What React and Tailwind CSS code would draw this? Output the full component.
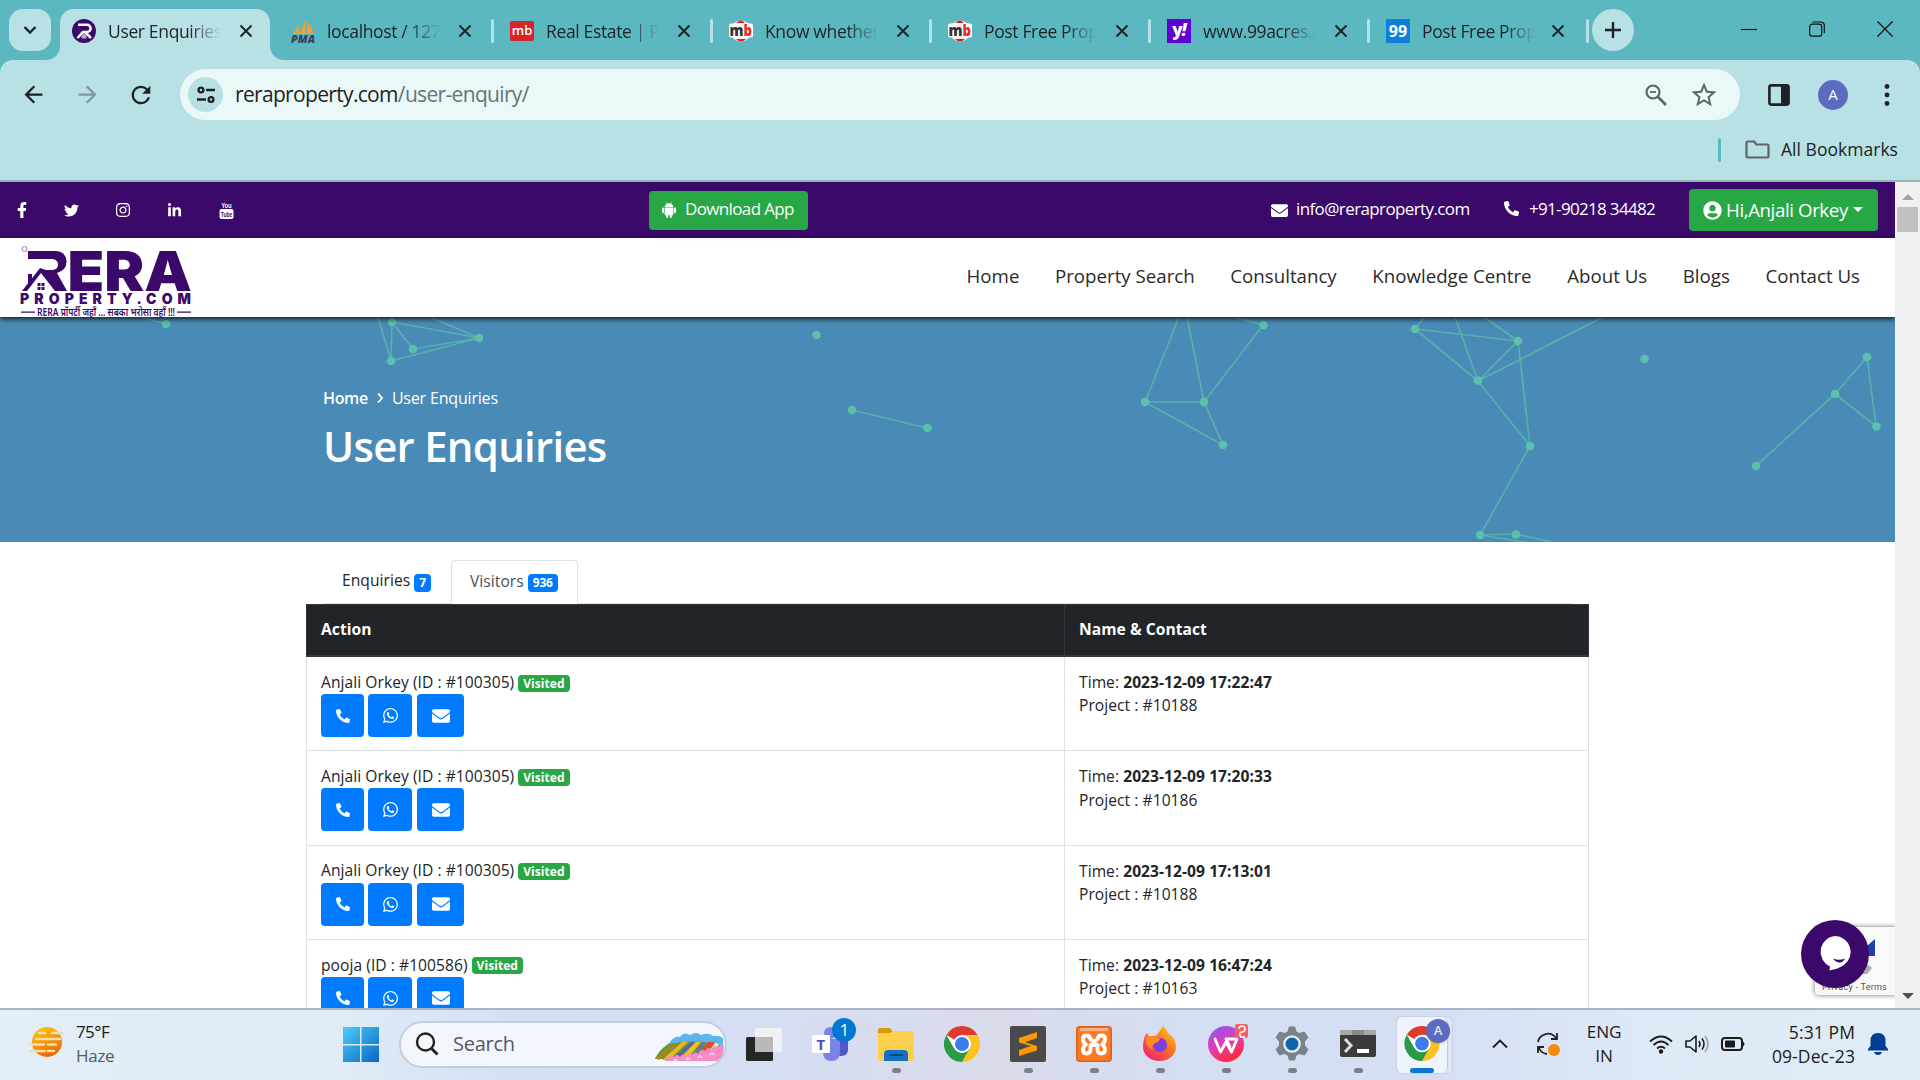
import React from "react";
import { FaFacebookF, FaTwitter, FaInstagram, FaLinkedinIn, FaEnvelope, FaPhoneAlt, FaWhatsapp, FaUserCircle } from "react-icons/fa";
import { MdArrowBack, MdArrowForward, MdRefresh, MdStarOutline } from "react-icons/md";

/* ---------- favicons ---------- */
const ReraFav = () => (
  <svg viewBox="0 0 24 24" className="h-6 w-6">
    <circle cx="12" cy="12" r="12" fill="#3b096a" />
    <path d="M6 5.800h9a3.600 3.600 0 0 1 0 7.200H11L5.500 19M13 13l6 6" fill="none" stroke="#fff" strokeWidth="2.500" />
    <path d="M9.500 19.500v-3l2.500-2.500 2.500 2.500v3z" fill="#b9a6cf" />
  </svg>
);
const PmaFav = () => (
  <svg viewBox="0 0 24 24" className="h-6 w-6">
    <path d="M2 15Q6 10 7 4l1 11zM8 15Q13 8 13.500 0L15 15zM15.500 15L17 3q4 6 6 12z" fill="#f6a02e" />
    <text x="0" y="23.500" fontSize="10.500" fontWeight="800" fontStyle="italic" fontFamily="Open Sans, sans-serif" fill="#3b3f63" textLength="24" lengthAdjust="spacingAndGlyphs">PMA</text>
  </svg>
);
const MbFav = () => (
  <div className="flex h-5 w-6 items-center justify-center rounded-[2px] bg-[#d8232a] pb-[2px] font-['Open_Sans',sans-serif] text-[13px] font-semibold leading-none text-white">mb</div>
);
const MbRound = () => (
  <svg viewBox="0 0 24 24" className="h-6 w-6">
    <circle cx="12" cy="12" r="10.500" fill="#fbeeee" />
    <path d="M7 4Q12-1 16 4zM7 20q5 5 10 0z" fill="#e3201b" />
    <rect x="0" y="4.500" width="24" height="14" rx="2" fill="#fff" />
    <text x="0.500" y="17" fontSize="16" fontWeight="800" fontFamily="Open Sans, sans-serif" fill="#333" textLength="14" lengthAdjust="spacingAndGlyphs">m</text>
    <text x="14.500" y="17" fontSize="16" fontWeight="800" fontFamily="Open Sans, sans-serif" fill="#ee2a24" textLength="8.500" lengthAdjust="spacingAndGlyphs">b</text>
  </svg>
);
const YahooFav = () => (
  <div className="flex h-6 w-6 items-center justify-center bg-[#5f01d1] pb-1 font-['Open_Sans',sans-serif] text-[17px] font-extrabold leading-none tracking-[-1px] text-white">y<i>!</i></div>
);
const NNFav = () => (
  <div className="flex h-6 w-6 items-center justify-center bg-[#0f7fdc] font-['Open_Sans',sans-serif] text-[16px] font-bold leading-none text-white">99</div>
);

const CloseX = () => (
  <svg viewBox="0 0 14 14" className="h-[14px] w-[14px] shrink-0">
    <path d="M1.500 1.500l11 11M12.500 1.500l-11 11" stroke="#1f2224" strokeWidth="2" />
  </svg>
);

const tabs = [
  [PmaFav, "localhost / 127.0"],
  [MbFav, "Real Estate | Prop"],
  [MbRound, "Know whether"],
  [MbRound, "Post Free Property"],
  [YahooFav, "www.99acres.com"],
  [NNFav, "Post Free Property"],
];

const Title = ({ children }) => (
  <span className="ml-3 w-[113px] shrink-0 overflow-hidden whitespace-nowrap text-[17.500px] leading-6 tracking-[-0.350px] text-[#1f2224] [mask-image:linear-gradient(to_right,black_72%,transparent)]">{children}</span>
);

function TabStrip() {
  return (
    <div className="flex h-[60px] items-start bg-[#5bb8c1] pt-[9px] pl-[9px]">
      <div className="flex h-[42px] w-[42px] items-center justify-center rounded-[14px] bg-[#b8e1e5]">
        <svg viewBox="0 0 14 10" className="h-[10px] w-[14px]"><path d="M1.500 2L7 7.500 12.500 2" fill="none" stroke="#1f2224" strokeWidth="2.400" /></svg>
      </div>
      <div className="relative ml-[9px] flex h-[51px] w-[210px] items-center rounded-t-[14px] bg-[#b8e1e5] pb-[7px] pl-3">
        <svg viewBox="0 0 14 14" className="absolute -left-[14px] bottom-0 h-[14px] w-[14px]"><path d="M14 0v14H0A14 14 0 0 0 14 0" fill="#b8e1e5" /></svg>
        <svg viewBox="0 0 14 14" className="absolute -right-[14px] bottom-0 h-[14px] w-[14px]"><path d="M0 0v14h14A14 14 0 0 1 0 0" fill="#b8e1e5" /></svg>
        <ReraFav /><Title>User Enquiries</Title><span className="w-[18px]" /><CloseX />
      </div>
      <div className="flex h-[44px] pl-[5px]">
        {tabs.map(([Icon, t], i) => (
          <div key={i} className="flex w-[219px] items-center pl-4">
            <Icon /><Title>{t}</Title><span className={i === 5 ? "w-[16px]" : "w-[18px]"} /><CloseX />
            <span className="ml-auto h-6 w-[3px] rounded bg-[#b8e1e5]" />
          </div>
        ))}
      </div>
      <div className="ml-[3px] flex h-[42px] w-[42px] items-center justify-center rounded-full bg-[#b8e1e5]">
        <svg viewBox="0 0 16 16" className="h-4 w-4"><path d="M8 0v16M0 8h16" stroke="#1f2224" strokeWidth="2.400" /></svg>
      </div>
      <div className="ml-auto flex h-10 items-center gap-[52px] pr-[27px]">
        <svg viewBox="0 0 16 16" className="h-4 w-4"><path d="M0 8.500h16" stroke="#111" strokeWidth="1.200" /></svg>
        <svg viewBox="0 0 16 16" className="h-4 w-4" fill="none" stroke="#111" strokeWidth="1.200"><rect x="0.700" y="3.200" width="12" height="12" rx="2.500" /><path d="M3.500 1h8.500a3.300 3.300 0 0 1 3.300 3.300V12" /></svg>
        <svg viewBox="0 0 16 16" className="h-4 w-4"><path d="M.5.5l15 15M15.500.5l-15 15" stroke="#111" strokeWidth="1.200" /></svg>
      </div>
    </div>
  );
}

function Toolbar() {
  return (
    <div className="bg-[#5bb8c1]">
      <div className="h-[122px] rounded-t-[13px] border-b-2 border-[#93b4b7] bg-[#b8e1e5]">
        <div className="flex h-[69px] items-center">
          <MdArrowBack className="ml-[20px] h-[27px] w-[27px] text-[#1f2224]" />
          <MdArrowForward className="ml-[27px] h-[27px] w-[27px] text-[#7b999c]" />
          <MdRefresh className="ml-[26px] h-[28px] w-[28px] text-[#1f2224]" />
          <div className="ml-[25px] flex h-[51px] w-[1560px] items-center rounded-full bg-[#ebf8f8] pl-2">
            <div className="flex h-[35px] w-[35px] items-center justify-center rounded-full bg-[#b8e1e5]">
              <svg viewBox="0 0 18 18" className="h-[18px] w-[18px]" fill="none" stroke="#1f2224" strokeWidth="2.400"><circle cx="4" cy="4" r="2.400" /><path d="M9 4h9M0 13.500h9" /><circle cx="14" cy="13.500" r="2.400" /></svg>
            </div>
            <span className="mb-px ml-[12px] text-[21px] leading-7 tracking-[-0.670px] text-[#1f2224]">reraproperty.com<span className="text-[#62767a]">/user-enquiry/</span></span>
            <svg viewBox="0 0 22 22" className="mr-[22px] ml-auto h-[22px] w-[22px]" fill="none" stroke="#5b6668" strokeWidth="2.200"><circle cx="8" cy="8" r="6.500" /><path d="M12.800 12.800L21 21" strokeWidth="2.800" /><path d="M5 8h6" strokeWidth="1.800" /></svg>
            <MdStarOutline className="mr-[21px] h-[30px] w-[30px] text-[#5b6668]" />
          </div>
          <svg viewBox="0 0 22 22" className="ml-[28px] h-[22px] w-[22px]"><rect x="1.400" y="1.400" width="19.200" height="19.200" rx="2" fill="none" stroke="#1f2224" strokeWidth="2.600" /><path d="M13 1h7v20h-7z" fill="#1f2224" /></svg>
          <div className="ml-[28px] flex h-[30px] w-[30px] items-center justify-center rounded-full bg-[#5c6bc0] text-[15px] text-white">A</div>
          <svg viewBox="0 0 6 22" className="ml-[36px] h-[22px] w-[6px]" fill="#1f2224"><circle cx="3" cy="2.500" r="2.400" /><circle cx="3" cy="11" r="2.400" /><circle cx="3" cy="19.500" r="2.400" /></svg>
        </div>
        <div className="flex h-[41px] items-center justify-end pr-[22px]">
          <span className="mr-[24px] h-6 w-[3px] rounded bg-[#5bb8c1]" />
          <svg viewBox="0 0 25 19" className="mr-[11px] h-[19px] w-[25px]"><path d="M1.500 2.500q0-1 1-1H9l2.500 3h11q1 0 1 1v11q0 1-1 1h-20q-1 0-1-1z" fill="none" stroke="#5b6668" strokeWidth="2.200" strokeLinejoin="round" /></svg>
          <span className="pb-px text-[17.500px] leading-6 tracking-[0.030px] text-[#1f2224]">All Bookmarks</span>
        </div>
      </div>
    </div>
  );
}

function TopBar() {
  return (
    <div className="flex h-[56px] items-center bg-[#3b096a] text-white">
      <div className="flex w-[649px] items-center">
        <FaFacebookF className="ml-[14px] h-4 w-4" />
        <FaTwitter className="ml-[34px] h-[15px] w-[15px]" />
        <FaInstagram className="ml-[36px] h-4 w-4" />
        <FaLinkedinIn className="ml-[36px] h-[15px] w-[15px]" />
        <svg viewBox="0 0 15 18" className="ml-[37px] h-[18px] w-[15px]">
          <text x="2.500" y="6.800" fontSize="8" fontWeight="700" fontFamily="Liberation Sans, sans-serif" fill="#fff" textLength="10" lengthAdjust="spacingAndGlyphs">You</text>
          <rect x="0.500" y="8" width="14" height="10" rx="2" fill="#fff" />
          <text x="1.800" y="16" fontSize="8" fontWeight="700" fontFamily="Liberation Sans, sans-serif" fill="#3b096a" textLength="11.500" lengthAdjust="spacingAndGlyphs">Tube</text>
        </svg>
      </div>
      <div className="flex h-[39px] w-[159px] items-center rounded bg-[#28a745] pb-[2px] pl-[13px]">
        <svg viewBox="0 0 14 16" className="mt-px h-4 w-[14px]" fill="#fff">
          <path d="M2.600 5.200Q2.800 2.600 5 1.700L4.200.300l.5-.2.800 1.400q1.500-.4 3 0L9.300.100l.5.200L9 1.700q2.200.9 2.400 3.500zM2.600 5.700h8.800v6.600q0 .9-.9.900H9.700v1.900q0 .9-.9.900t-.9-.9v-1.900H6.100v1.900q0 .9-.9.900t-.9-.9v-1.900h-.8q-.9 0-.9-.9z" />
          <rect x="0" y="5.500" width="1.900" height="5.600" rx="0.950" /><rect x="12.100" y="5.500" width="1.900" height="5.600" rx="0.950" />
        </svg>
        <span className="ml-[9px] text-[17px] font-medium tracking-[-0.640px] whitespace-nowrap">Download App</span>
      </div>
      <FaEnvelope className="ml-[463px] h-[17px] w-[17px]" />
      <span className="ml-2 w-[175px] pb-[2px] text-[17px] font-medium tracking-[-0.610px] whitespace-nowrap">info@reraproperty.com</span>
      <FaPhoneAlt className="mb-[3px] ml-[33px] h-[15px] w-[15px]" />
      <span className="ml-[10px] w-[127px] pb-[2px] text-[17px] font-medium tracking-[-0.680px] whitespace-nowrap">+91-90218 34482</span>
      <div className="ml-[33px] flex h-[42px] w-[189px] items-center rounded bg-[#28a745] pl-[14px]">
        <FaUserCircle className="h-[19px] w-[19px]" />
        <span className="ml-1 text-[18.700px] font-medium tracking-[-0.400px] whitespace-nowrap">Hi,Anjali Orkey</span>
        <svg viewBox="0 0 10 5" className="mb-px ml-[5px] h-[5px] w-[10px]"><path d="M0 0h10L5 5z" fill="#fff" /></svg>
      </div>
    </div>
  );
}

const Logo = () => (
  <svg viewBox="0 0 172 72" className="mt-[8px] ml-[20px] h-[72px] w-[172px]" fill="#3b096a">
    <circle cx="4.500" cy="3" r="2.500" fill="none" stroke="#8d6cab" strokeWidth="0.900" />
    <path d="M8 5H36Q46 6 46.500 15T37 27L47 45H35L22 24H33Q38 23 38 18.500T33 13H8z" />
    <path d="M8 28h4v6l-4 5zM2 45L20 22l6 2 12 21h-3L21 27 7 45z" />
    <path d="M17.500 37h3v3h-3zM21.500 37h3v3h-3zM17.500 41h3v3h-3zM21.500 41h3v3h-3z" />
    <text x="47.500" y="45" fontSize="55" fontWeight="900" fontFamily="Inter, sans-serif" textLength="124.500" lengthAdjust="spacingAndGlyphs">ERA</text>
    <text x="0" y="58" fontSize="14" fontWeight="900" fontFamily="Inter, sans-serif" textLength="171">PROPERTY.COM</text>
    <path d="M1 65.500h14v1.200H1zM157 65.500h14v1.200h-14z" />
    <text x="17" y="69.500" fontSize="10.500" fontWeight="600" fontFamily="Noto Sans, Noto Sans Devanagari, sans-serif" textLength="138" lengthAdjust="spacingAndGlyphs">RERA प्रॉपर्टी जहाँ ... सबका भरोसा वहाँ !!!</text>
  </svg>
);

function Nav() {
  return (
    <div className="relative z-10 flex h-[79px] items-center bg-white shadow-[0_2px_5px_rgba(0,0,0,0.800)]">
      <Logo />
      <div className="ml-auto flex gap-[35.600px] pr-[35px] pb-[2px] text-[18.700px] font-medium whitespace-nowrap text-[#2a2a2a]">
        {["Home", "Property Search", "Consultancy", "Knowledge Centre", "About Us", "Blogs", "Contact Us"].map((t) => <span key={t}>{t}</span>)}
      </div>
    </div>
  );
}

/* Decorative network of points, in banner coordinates */
const points = [[166, 7], [392, 5], [479, 21], [413, 32], [391, 44], [816.500, 18], [852, 93], [927.500, 111], [1263.500, 8], [1145, 85], [1204, 85], [1223, 128], [1415, 12], [1518, 24], [1478, 63.500], [1530, 129], [1480, 218], [1516, 217.500], [1644.500, 42], [1867, 40], [1835, 77], [1876.500, 109.500], [1756, 149]];
const lines = [[141, 0, 166, 7], [392, 5, 479, 21], [392, 5, 413, 32], [413, 32, 479, 21], [391, 44, 479, 21], [391, 44, 392, 5], [391, 44, 378, 0], [479, 21, 430, 0], [852, 93, 927, 111], [1145, 85, 1179, 0], [1204, 85, 1187, 0], [1204, 85, 1263, 8], [1145, 85, 1204, 85], [1145, 85, 1223, 128], [1204, 85, 1223, 128], [1263, 8, 1236, 0], [1415, 12, 1518, 24], [1415, 12, 1478, 64], [1478, 64, 1518, 24], [1518, 24, 1530, 129], [1478, 64, 1530, 129], [1530, 129, 1480, 218], [1480, 218, 1516, 217], [1480, 218, 1524, 225], [1516, 217, 1551, 225], [1415, 12, 1425, 0], [1478, 64, 1455, 0], [1478, 64, 1603, 0], [1518, 24, 1484, 0], [1867, 40, 1835, 77], [1867, 40, 1876, 109], [1835, 77, 1876, 109], [1835, 77, 1756, 149]];

function Banner() {
  return (
    <div className="relative h-[225px] overflow-hidden bg-[#4a8ab6] pt-[69px] pl-[323px] text-white">
      <svg viewBox="0 0 1895 225" className="absolute top-0 left-0 h-[225px] w-[1895px]">
        {lines.map(([a, b, c, d], i) => <line key={i} x1={a} y1={b} x2={c} y2={d} stroke="#5cc0a8" strokeOpacity="0.700" strokeWidth="1.700" />)}
        {points.map(([x, y], i) => <circle key={i} cx={x} cy={y} r="4.300" fill="#5cc0ab" />)}
      </svg>
      <div className="relative flex h-6 items-center text-[16px] tracking-[-0.350px]">
        <span className="font-semibold">Home</span>
        <svg viewBox="0 0 6 10" className="mx-[9px] h-[10px] w-[6px]"><path d="M1 .5L5 5 1 9.500" fill="none" stroke="#fff" strokeWidth="1.700" /></svg>
        <span className="font-medium tracking-[-0.180px]">User Enquiries</span>
      </div>
      <h1 className="relative mt-[5px] text-[42px] leading-[62px] font-semibold tracking-[-0.750px]">User Enquiries</h1>
    </div>
  );
}

const rows = [
  ["Anjali Orkey (ID : #100305)", "2023-12-09 17:22:47", "#10188"],
  ["Anjali Orkey (ID : #100305)", "2023-12-09 17:20:33", "#10186"],
  ["Anjali Orkey (ID : #100305)", "2023-12-09 17:13:01", "#10188"],
  ["pooja (ID : #100586)", "2023-12-09 16:47:24", "#10163"],
];

function Table() {
  return (
    <div className="mx-auto w-[1283px] text-[15.600px] leading-[23.400px] tracking-[0.050px] text-[#212529]">
      <div className="mx-[17px] flex h-[62px] items-end border-b border-[#dee2e6]">
        <div className="flex h-[43px] w-[128px] items-center pb-px pl-[19px]">Enquiries<span className="mt-[3px] ml-1 rounded bg-[#007bff] px-[5px] text-[12px] leading-[18px] font-bold text-white">7</span></div>
        <div className="-mb-px flex h-[44px] w-[127px] items-center rounded-t border border-b-0 border-[#dee2e6] bg-white pb-[2px] pl-[18px] text-[#495057]">Visitors<span className="mt-[3px] ml-1 rounded bg-[#007bff] px-[5px] text-[12px] leading-[18px] font-bold tracking-[-0.200px] text-white">936</span></div>
      </div>
      <div className="flex h-[53px] border border-b-2 border-[#32383e] bg-[#212529] font-bold text-white">
        <div className="w-[758px] border-r border-[#32383e] pt-[13px] pl-[14px]">Action</div>
        <div className="pt-[13px] pl-[14px]">Name &amp; Contact</div>
      </div>
      {rows.map(([n, t, p], i) => (
        <div key={i} className="flex h-[94.330px] border border-t-0 border-[#dee2e6]">
          <div className="w-[758px] border-r border-[#dee2e6] pt-[13px] pl-[14px]">
            <div className="flex h-6 items-center pt-px">{n}<span className="mt-px ml-1 rounded bg-[#28a745] px-[5px] text-[12px] leading-[17px] font-bold text-white">Visited</span></div>
            <div className="flex gap-[4px] text-white">
              <span className="flex h-[43px] w-[43px] items-center justify-center rounded bg-[#007bff]"><FaPhoneAlt className="h-[14px] w-[14px]" /></span>
              <span className="flex h-[43px] w-[44px] items-center justify-center rounded bg-[#007bff]"><FaWhatsapp className="h-[17px] w-[17px]" /></span>
              <span className="ml-px flex h-[43px] w-[47px] items-center justify-center rounded bg-[#007bff]"><FaEnvelope className="h-[18px] w-[18px]" /></span>
            </div>
          </div>
          <div className="pt-[14px] pl-[14px]">
            <div>Time: <b>{t}</b></div>
            <div>Project : {p}</div>
          </div>
        </div>
      ))}
    </div>
  );
}

/* ---------- taskbar icons ---------- */
const Chrome = () => (
  <svg viewBox="0 0 36 36" className="h-9 w-9">
    <circle cx="18" cy="18" r="18" fill="#fff" />
    <path d="M18 18L2.400 9A18 18 0 0 1 33.600 9z" fill="#de3a2f" />
    <path d="M18 9h15.600A18 18 0 0 1 18 36l7.800-13.500z" fill="#fcc31e" />
    <path d="M2.400 9A18 18 0 0 0 18 36l7.800-13.500H10.200z" fill="#2a9a48" />
    <circle cx="18" cy="18" r="9" fill="#fff" /><circle cx="18" cy="18" r="7" fill="#3a7bed" />
  </svg>
);
const TaskView = () => (
  <svg viewBox="0 0 36 36" className="h-9 w-9"><rect x="0" y="11" width="27" height="24" rx="1.500" fill="#262626" /><rect x="9" y="2" width="27" height="24" rx="1.500" fill="#f1f1f3" /><path d="M9 11h18v15H9z" fill="#b9b9bb" /></svg>
);
const Teams = () => (
  <svg viewBox="0 0 36 36" className="h-9 w-9 overflow-visible">
    <circle cx="18" cy="7" r="6" fill="#7b83eb" /><path d="M27 12h9v12q0 5-6 6h-3z" fill="#5059c9" /><path d="M11 13h17v13q0 9-8.500 9T11 26z" fill="#7b83eb" />
    <rect x="0" y="9" width="18" height="18" rx="1" fill="#fff" /><text x="4.500" y="23.500" fontSize="15" fontWeight="700" fontFamily="Open Sans, sans-serif" fill="#4b53bc">T</text>
    <circle cx="32" cy="4" r="12" fill="#0078d4" /><text x="27.500" y="10" fontSize="17" fontFamily="Open Sans, sans-serif" fill="#fff">1</text>
  </svg>
);
const Explorer = () => (
  <svg viewBox="0 0 36 36" className="h-9 w-9"><path d="M0 4q0-2 2-2h10l3 4v6H0z" fill="#d99a07" /><rect y="5" width="36" height="30" rx="2" fill="#fccf4d" /><path d="M0 7h12l3-2H0z" fill="#d99a07" /><path d="M6 35V28q0-4 4-4h16q4 0 4 4v7z" fill="#1273c4" /><path d="M11 29h14" stroke="#0b4a86" strokeWidth="2" /></svg>
);
const Sublime = () => (
  <svg viewBox="0 0 36 36" className="h-9 w-9"><rect width="36" height="36" rx="2" fill="#4a4a4a" /><path d="M9 12L27 6v6l-12 4.300 12 3.700v4.500L9 30v-6l12-4-12-3.500z" fill="#ff9800" /></svg>
);
const Xampp = () => (
  <svg viewBox="0 0 36 36" className="h-9 w-9"><rect width="36" height="36" rx="4" fill="#d9611a" /><rect x="1.500" y="1.500" width="33" height="33" rx="3" fill="#fb7a24" /><rect x="4" y="2" width="28" height="3" fill="#f7b083" /><path d="M14.500 13Q14 9.500 10.500 9.500 7 9.500 7 13.500q0 3 3 5-3 2-3 5 0 4 3.500 4 4 0 4-4.500v-4h7v4q0 4.500 4 4.500 3.500 0 3.500-4 0-3-3-5 3-2 3-5 0-4-3.500-4-3.500 0-4 3.500L18 16z" fill="none" stroke="#fff" strokeWidth="3.800" strokeLinejoin="round" /></svg>
);
const Firefox = () => (
  <svg viewBox="0 0 36 36" className="h-9 w-9">
    <defs><linearGradient id="ff" x1="1" y1="0" x2="0.200" y2="1"><stop offset="0" stopColor="#ffe226" /><stop offset="0.450" stopColor="#ff7a1c" /><stop offset="1" stopColor="#ef1f72" /></linearGradient></defs>
    <path d="M21 0q4 3 5 7 8 5 8 14a16.500 14 0 0 1-33 0Q1 12 5 7q1 3 3 4 3-2 6-1 4-5 7-10z" fill="url(#ff)" />
    <circle cx="18" cy="19" r="7" fill="#7b3fe0" /><path d="M4 11q8-3 14 2-1 3-5 4-4 3-2 7-8-3-7-13z" fill="#ff8a1f" />
  </svg>
);
const Wps = () => (
  <svg viewBox="0 0 36 36" className="h-9 w-9 overflow-visible">
    <defs><linearGradient id="wps" x1="0" y1="0" x2="0.500" y2="1"><stop offset="0" stopColor="#7d5cff" /><stop offset="0.550" stopColor="#e33bb8" /><stop offset="1" stopColor="#ff2b3d" /></linearGradient></defs>
    <circle cx="18" cy="18" r="18" fill="url(#wps)" /><path d="M7 13l5.500 13L18 16l5.500 10L29 13H18l4 8" fill="none" stroke="#fff" strokeWidth="2.800" strokeLinejoin="round" strokeLinecap="round" />
    <rect x="27" y="-2" width="13" height="14" rx="2.500" fill="#f55f66" /><path d="M31 3q0-3 3-3t3 3-3 3-2 3 2 2h3" fill="none" stroke="#fff" strokeWidth="1.400" />
  </svg>
);
const Gear = () => (
  <svg viewBox="0 0 36 36" className="h-9 w-9">
    <path d="M15 0.500h6l1.500 5 3 1.500 5-1.500 4 6-3.500 4v4l3.500 4-4 6-5-1.500-3 1.500-1.500 5h-6l-1.500-5-3-1.500-5 1.500-4-6 3.500-4v-4l-3.500-4 4-6 5 1.500 3-1.500z" fill="#7a838a" />
    <circle cx="18" cy="18" r="8.800" fill="#e9edf1" /><circle cx="18" cy="18" r="6.500" fill="#0f62ac" />
  </svg>
);
const Terminal = () => (
  <svg viewBox="0 0 36 36" className="h-9 w-9"><rect y="4" width="36" height="27" rx="2" fill="#3b3b3b" /><path d="M0 9V6q0-2 2-2h32q2 0 2 2v3z" fill="#a8a8a8" /><path d="M12 4h12v5H12z" fill="#8a8a8a" /><path d="M5 13l6 6.500L5 26" fill="none" stroke="#ddd" strokeWidth="3" /><rect x="17" y="23" width="12" height="4" fill="#fff" /></svg>
);

const apps = [[TaskView, 0], [Teams, 0], [Explorer, 1], [Chrome, 0], [Sublime, 1], [Xampp, 1], [Firefox, 1], [Wps, 1], [Gear, 1], [Terminal, 1]];

function Taskbar() {
  return (
    <div className="flex h-[72px] items-center border-t-2 border-[#aab3c2] bg-[linear-gradient(90deg,#e3eef6_0%,#dfebf5_18%,#d4dff6_27%,#d5def4_38%,#d9dbea_52%,#d3dff4_65%,#d6def3_74%,#deebf7_88%,#dfecf8_100%)] pb-[2px] text-[#1b1b1b]">
      <svg viewBox="0 0 36 32" className="mb-1 ml-[28px] h-8 w-9">
        <defs><linearGradient id="sun" x1="0" y1="0" x2="0.400" y2="1"><stop offset="0" stopColor="#ffce0a" /><stop offset="1" stopColor="#ee6a0c" /></linearGradient></defs>
        <circle cx="19" cy="16" r="15" fill="url(#sun)" />
        <g stroke="#f3dfae" strokeLinecap="round" strokeWidth="2.400"><path d="M11 7h6M24 7h10M8 13h24M2 18.500h14M20 18.500h8M2 25h15M20 25h6" /></g>
      </svg>
      <div className="ml-[12px] w-[80px] text-[17px] leading-6 tracking-[-0.300px]"><div className="tracking-[-0.600px]">75°F</div><div className="text-[#55595f]">Haze</div></div>
      <svg viewBox="0 0 36 36" className="ml-[187px] h-9 w-9">
        <defs><linearGradient id="win" x1="0" y1="0" x2="1" y2="1"><stop offset="0" stopColor="#4ecbfa" /><stop offset="1" stopColor="#0669c4" /></linearGradient></defs>
        <path d="M0 1h17v17H0zM18.500 1H36v17H18.500zM0 19.500h17V36H0zM18.500 19.500H36V36H18.500z" fill="url(#win)" />
      </svg>
      <div className="ml-[20px] flex h-[47px] w-[328px] items-center overflow-hidden rounded-full border-2 border-[#c3cde0] bg-[#f3f6fd] pl-[14px]">
        <svg viewBox="0 0 24 24" className="h-6 w-6" fill="none" stroke="#222" strokeWidth="2.400"><circle cx="10.500" cy="10" r="8.500" /><path d="M16.500 16.500l6 6" strokeWidth="3" /></svg>
        <span className="ml-[14px] text-[20px] tracking-[-0.250px] text-[#55585e]">Search</span>
        <svg viewBox="0 0 70 28" className="mt-[6px] mr-[1px] ml-auto h-7 w-[70px]">
          <path d="M16 9Q20 3 26 4q4-6 10-2 6-4 11 0 8-3 12 1 5-1 10 2v8L12 14z" fill="#5db5ee" />
          <path d="M14 11q28-6 55 2v13H1q3-8 13-15z" fill="#5f9a3c" />
          <path d="M1 25L20 10h5L5 27z" fill="#a88718" />
          <path d="M8 27L28 9h6L15 27z" fill="#f0b41d" />
          <path d="M17 27L37 9h4L25 26z" fill="#5a68a8" />
          <path d="M25 26L42 9h5L34 25z" fill="#f0c321" />
          <path d="M35 25L48 9h4l-9 15z" fill="#6d7a8c" />
          <path d="M43 23L54 9h7l-8 12z" fill="#e8472c" />
          <path d="M53 21l8-11 4 1-5 9z" fill="#f6f0d0" />
          <path d="M11 28q1-4 4-3 2-4 5-1 3-4 6 0 3-5 6-1 3-5 6-1 3-5 6-1 3-6 7-3 3-5 6-2 4-5 7-2 3-3 6-2l-1 16z" fill="#f68cc3" />
          <path d="M20 28q1-3 3 0M32 27q2-4 4 0M44 25q2-4 4 0M56 22q2-4 4 0" fill="none" stroke="#fbd3e8" strokeWidth="1.600" />
        </svg>
      </div>
      <div className="ml-[4px] flex h-full">
        {apps.map(([Icon, dot], i) => (
          <div key={i} className="flex w-[66px] flex-col items-center pt-[16px]">
            <Icon />
            {dot ? <span className="mt-[6px] h-[5px] w-[9px] rounded-full bg-[#7a808c]" /> : null}
          </div>
        ))}
        <div className="mt-[6px] ml-[5px] flex h-[58px] w-[57px] rounded-md border border-[#c9d1e2] bg-[#dfe5f3]">
          <div className="relative flex w-[51px] flex-col items-center rounded-md border-r border-[#c3cbdd] bg-[#eff3fb] pt-[9px]">
            <Chrome />
            <span className="mt-[7px] h-[5px] w-6 rounded-full bg-[#0a78d4]" />
            <span className="absolute top-[2px] right-[-3px] flex h-6 w-6 items-center justify-center rounded-full bg-[#5c6bc0] text-[13px] font-semibold text-[#dfe4ff] shadow">A</span>
          </div>
        </div>
      </div>
      <svg viewBox="0 0 16 10" className="ml-[39px] h-[10px] w-4"><path d="M1 8.500l7-7 7 7" fill="none" stroke="#1b1b1b" strokeWidth="1.800" /></svg>
      <svg viewBox="0 0 26 26" className="ml-[27px] h-[26px] w-[26px]" fill="none" stroke="#222" strokeWidth="1.800"><path d="M3 11A10 10 0 0 1 21 7M22 2v6h-6M22 13M3 22v-6h6M4 17a10 10 0 0 0 8 6" /><circle cx="19" cy="19" r="6" fill="#f7890b" stroke="none" /></svg>
      <div className="ml-[22px] w-[42px] text-center text-[17.200px] leading-6 tracking-[-0.200px]"><div>ENG</div><div>IN</div></div>
      <svg viewBox="0 0 24 20" className="ml-[24px] h-5 w-6" fill="none" stroke="#1b1b1b" strokeWidth="1.800"><path d="M1 7.500q11-10 22 0M4.500 11q7.500-7 15 0M8 14.500q4-3.500 8 0" /><circle cx="12" cy="17.500" r="1.300" fill="#1b1b1b" /></svg>
      <svg viewBox="0 0 24 20" className="ml-[12px] h-5 w-6" fill="none" stroke="#1b1b1b" strokeWidth="1.600"><path d="M1 7h4l6-5v16l-6-5H1z" strokeLinejoin="round" /><path d="M14 7q2 3 0 6M17 4.500q4 5.500 0 11" /><path d="M20 2q6 8 0 16" stroke="#9a9fa8" /></svg>
      <svg viewBox="0 0 25 16" className="ml-[12px] h-4 w-[25px]"><rect x="1" y="2" width="20" height="12" rx="3" fill="none" stroke="#1b1b1b" strokeWidth="2" /><rect x="4" y="4.500" width="10" height="7" rx="1" fill="#1b1b1b" /><path d="M22 5.500q3 2.500 0 5z" fill="#1b1b1b" /></svg>
      <div className="ml-auto text-right text-[17.500px] leading-6 tracking-[0.100px]"><div>5:31 PM</div><div>09-Dec-23</div></div>
      <svg viewBox="0 0 20 24" className="mr-[32px] ml-[13px] h-6 w-5" fill="#003e92"><path d="M10 1q7.500 0 7.500 8v5l2.500 3v1.500H0V17l2.500-3V9Q2.500 1 10 1zM6 20h8q-1 3-4 3t-4-3z" /></svg>
    </div>
  );
}

function ChatWidget() {
  return (
    <div className="absolute right-[25px] bottom-[13px] h-[70px] w-[80px]">
      <div className="mt-[2px] flex h-[68px] w-[80px] items-end justify-end rounded-l bg-[#f9f9f9] pr-2 shadow-[0_0_4px_1px_#999] [clip-path:inset(-5px_0_-5px_-5px)]">
        <svg viewBox="0 0 30 42" className="absolute top-[11px] right-[18px] h-[42px] w-[30px]"><path d="M12 4l8 6 8-7v17H12z" fill="#2040b0" /><path d="M12 27l8 1 5 4-5 6h-8z" fill="#ababab" /></svg>
        <span className="pb-[3px] font-[Roboto,sans-serif] text-[9px] leading-[10px] tracking-[0.250px] whitespace-nowrap text-[#555]">Privacy - Terms</span>
      </div>
      <svg viewBox="0 0 68 68" className="absolute -top-[5px] -left-[14px] h-[68px] w-[68px]">
        <circle cx="34" cy="34" r="34" fill="#3b096a" />
        <path d="M34 16a16 16 0 0 1 9 29q-6 4-14.500 5.500l.5-4A16 16 0 0 1 34 16z" fill="#fff" />
        <path d="M32 38.500q6 2.500 12 0-2 4.500-6 4t-6-4z" fill="#3b096a" />
      </svg>
    </div>
  );
}

export default function App() {
  return (
    <div className="flex h-[1080px] w-[1920px] flex-col overflow-hidden font-['Open_Sans',sans-serif]">
      <TabStrip />
      <Toolbar />
      <div className="relative flex h-[826px] shrink-0 overflow-hidden bg-white">
        <div className="w-[1895px] shrink-0">
          <TopBar /><Nav /><Banner /><Table />
        </div>
        <div className="relative z-20 flex h-[826px] w-[25px] flex-col items-center bg-[#f1f1f1]">
          <svg viewBox="0 0 12 6" className="mt-[12px] h-[6px] w-3"><path d="M0 6h12L6 0z" fill="#a3a3a3" /></svg>
          <div className="mt-[7px] h-[25px] w-[21px] bg-[#c1c1c1]" />
          <svg viewBox="0 0 12 6" className="mt-auto mb-[9px] h-[6px] w-3"><path d="M0 0h12L6 6z" fill="#505050" /></svg>
        </div>
        <ChatWidget />
      </div>
      <Taskbar />
    </div>
  );
}
